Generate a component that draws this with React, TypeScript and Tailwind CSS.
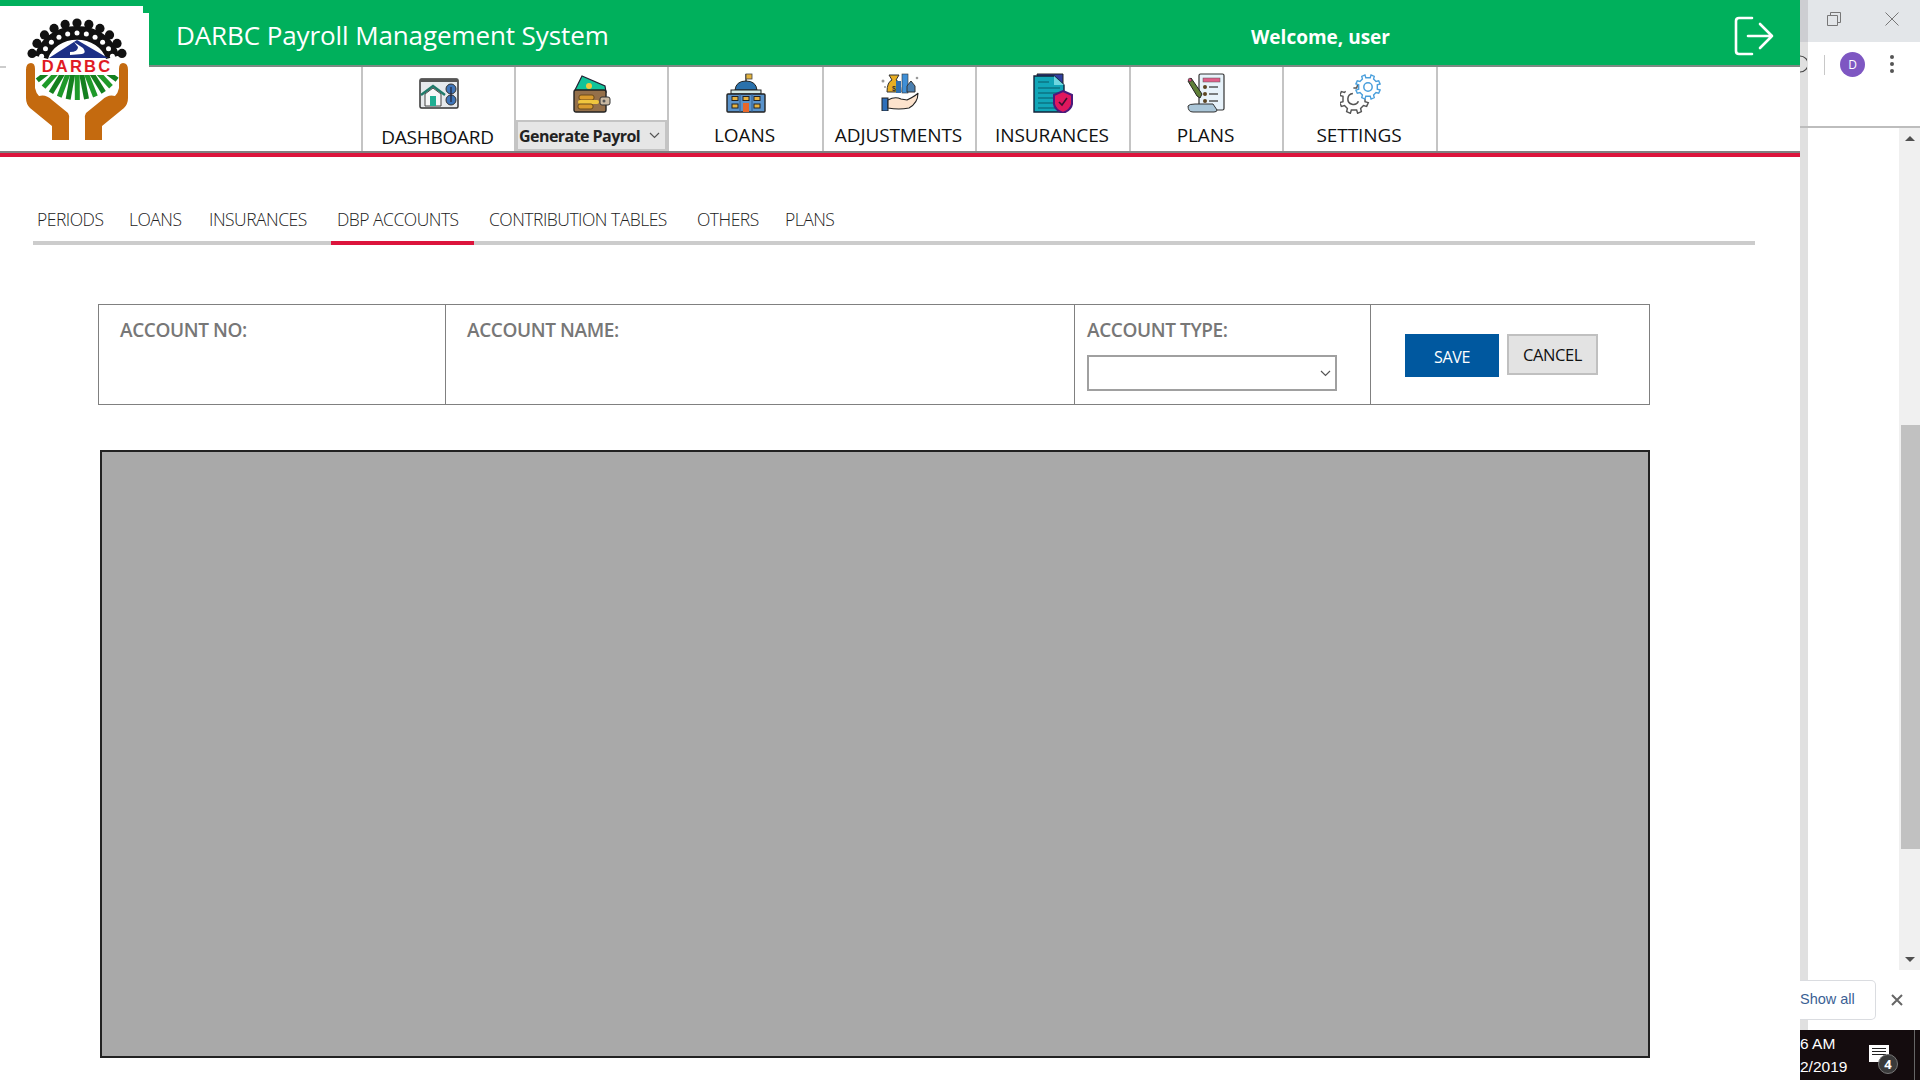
import React from "react";

const Logo = () => {
  const teeth = Array.from({ length: 11 }, (_, i) => 197 + i * 14.6);
  const hand = "M26 70 Q26 63 31 63 Q35 63 35 69 L35 88 Q36 93 39 96 Q46 94 52 100 L68 113 Q70 116 69 120 L69 140 L52 140 L52 126 L30 108 Q26 104 26 98 Z";
  return (
    <svg width="154" height="145" viewBox="0 0 154 145">
      <defs>
        <clipPath id="fanclip">
          <rect x="30" y="75" width="94" height="30" />
        </clipPath>
      </defs>
      <path d="M0 67 H6" stroke="#999" strokeWidth="1" />
      <path d="M34.5 55.6 A44 40 0 0 1 119.5 55.6 L106 59 A30 26 0 0 0 48 59 Z" fill="#111" />
      {teeth.map((a, i) => {
        const r = (a * Math.PI) / 180;
        return (
          <g key={i}>
            <circle cx={77 + 47 * Math.cos(r)} cy={66 + 43 * Math.sin(r)} r="4.6" fill="#111" />
            <circle cx={77 + 37 * Math.cos(r)} cy={66 + 33 * Math.sin(r)} r="2.5" fill="#fff" />
          </g>
        );
      })}
      <path d="M49 58 L77 40 L108 58 Z" fill="#1c2f86" />
      <path d="M70 52 Q78 52 78 47 L74 42 L83 48 Q87 53 82 54 L70 55 Z" fill="#fff" />
      <g clipPath="url(#fanclip)">
        {Array.from({ length: 13 }, (_, i) => {
          const a = ((26 + i * 10.6) * Math.PI) / 180;
          return (
            <line key={i} x1={77 + 18 * Math.cos(a)} y1={50 + 18 * Math.sin(a)} x2={77 + 50 * Math.cos(a)} y2={50 + 50 * Math.sin(a)} stroke={i % 2 ? "#14801f" : "#1f9a2a"} strokeWidth="5" />
          );
        })}
      </g>
      <path d={hand} fill="#c46a0f" />
      <path d={hand} fill="#c46a0f" transform="translate(154 0) scale(-1 1)" />
      <text x="77" y="72" textAnchor="middle" fill="#e01b24" fontFamily="'Liberation Sans',sans-serif" fontWeight="700" fontSize="16.5" letterSpacing="2.2">DARBC</text>
    </svg>
  );
};

const DashIcon = () => (
  <svg width="40" height="31" viewBox="0 0 40 31">
    <rect x="1" y="1" width="38" height="29" rx="1.5" fill="#e6e9ec" stroke="#333" strokeWidth="1.5" />
    <rect x="1" y="1" width="38" height="3" fill="#555" />
    <path d="M2 17 L14 8 L26 17" fill="none" stroke="#1f7a6a" strokeWidth="2.4" />
    <path d="M6 16 V28 H22 V16 L14 10 Z" fill="#f6f7f8" stroke="#444" strokeWidth="1" />
    <rect x="11" y="18" width="6" height="10" fill="#1fae92" />
    <circle cx="32" cy="11" r="5" fill="#3e74b8" stroke="#333" />
    <circle cx="32" cy="22" r="5" fill="#3e74b8" stroke="#333" />
    <path d="M32 9 V24" stroke="#223" strokeWidth="1.2" />
  </svg>
);
const WalletIcon = () => (
  <svg width="38" height="38" viewBox="0 0 38 38">
    <path d="M2 15 L9 1 L32 11 L33 17 Z" fill="#12c49a" stroke="#223" strokeWidth="1.2" />
    <circle cx="16" cy="11" r="3" fill="#f3c93c" />
    <rect x="1" y="15" width="32" height="22" rx="2" fill="#95704a" stroke="#222" strokeWidth="1.4" />
    <rect x="6" y="20" width="15" height="5" rx="2" fill="#d99b2e" stroke="#6b4a1a" />
    <rect x="5" y="25" width="21" height="4" rx="2" fill="#f0c63e" />
    <rect x="5" y="29" width="15" height="5" rx="2" fill="#d99b2e" stroke="#6b4a1a" />
    <rect x="27" y="22" width="10" height="8" rx="2" fill="#c9b9a2" stroke="#333" />
    <circle cx="31" cy="26" r="1.5" fill="#555" />
  </svg>
);
const LoansIcon = () => (
  <svg width="40" height="40" viewBox="0 0 40 40">
    <path d="M20 9 V1" stroke="#222" strokeWidth="1.3" />
    <rect x="20" y="1" width="6" height="5" fill="#e3b23c" stroke="#444" strokeWidth="0.8" />
    <path d="M9 17 Q10 8 20 8 Q30 8 31 17 Z" fill="#2a71ac" stroke="#222" strokeWidth="1" />
    <rect x="5" y="17" width="30" height="4" fill="#d2e9e6" stroke="#222" strokeWidth="1" />
    <rect x="1" y="21" width="38" height="18" rx="1" fill="#5a93cb" stroke="#222" strokeWidth="1.4" />
    {[6, 17, 28].map((x) => (
      <rect key={x} x={x} y="23.5" width="6" height="4" fill="#e8b33f" stroke="#222" strokeWidth="1" />
    ))}
    {[6, 28].map((x) => (
      <rect key={x} x={x} y="31" width="6" height="4" fill="#e8b33f" stroke="#222" strokeWidth="1" />
    ))}
    <rect x="17" y="30" width="6" height="9" fill="#e8672a" />
    <path d="M14 21 V39 M26 21 V39" stroke="#2c5e92" />
  </svg>
);
const AdjustIcon = () => (
  <svg width="38" height="38" viewBox="0 0 38 38">
    <circle cx="2" cy="8" r="1.5" fill="#999" />
    <circle cx="36" cy="5" r="1.3" fill="#999" />
    <circle cx="4" cy="14" r="1" fill="#999" />
    <path d="M6 19 Q6 9 11 7 L8 2 H18 L15 7 Q20 9 20 19 Z" fill="#e9ae22" stroke="#333" />
    <text x="13" y="18" textAnchor="middle" fontSize="7" fontWeight="700" fill="#333" fontFamily="'Liberation Sans',sans-serif">$</text>
    <rect x="21" y="1" width="6" height="19" fill="#3f8fd6" stroke="#333" strokeWidth="0.6" />
    <rect x="15" y="8" width="5" height="12" fill="#2f6fb0" />
    <path d="M26 19 V13 L30 8 L34 13 V19 Z" fill="#4a7fb0" stroke="#333" />
    <rect x="1" y="25" width="6" height="13" fill="#2e6fba" stroke="#222" />
    <path d="M7 27 Q14 23 20 26 L26 27 Q36 22 37 20 Q37 30 28 35 Q18 37 7 35 Z" fill="#fde3cd" stroke="#222" strokeWidth="1.1" />
  </svg>
);
const InsIcon = () => (
  <svg width="40" height="40" viewBox="0 0 40 40">
    <path d="M4 1 H30 V30 H10 Z" fill="#2f3f9f" stroke="#222" />
    <path d="M1 3 H21 L31 12 V39 H1 Z" fill="#12a6b8" stroke="#13233a" strokeWidth="1.4" />
    <path d="M21 3 V12 H31 Z" fill="#6ed7e0" />
    <path d="M5 9 H16 M5 15 H27 M5 20 H27 M5 25 H25 M5 30 H25 M5 35 H25" stroke="#085a68" strokeWidth="1.2" />
    <path d="M30 18 L39 22 V31 Q38 37 30 40 Q22 37 21 31 V22 Z" fill="#e0175e" stroke="#4a1a7c" strokeWidth="2" />
    <path d="M26 29 L29 32 L34 25" fill="none" stroke="#3a1030" strokeWidth="1.6" />
  </svg>
);
const PlansIcon = () => (
  <svg width="39" height="40" viewBox="0 0 39 40">
    <rect x="12" y="1" width="25" height="36" rx="1.5" fill="#e7f2fa" stroke="#333" strokeWidth="1.2" />
    <rect x="16" y="5" width="17" height="4" fill="#df5e88" stroke="#555" strokeWidth="0.5" />
    {[14, 21, 28].map((y) => (
      <g key={y}>
        <circle cx="18" cy={y} r="2" fill="#5c4522" />
        <path d={`M22 ${y} H31`} stroke="#555" strokeWidth="1.5" />
      </g>
    ))}
    <path d="M1 8 L4 5 L15 21 L13 25 L10 23 Z" fill="#5f7f37" stroke="#222" />
    <circle cx="3" cy="7" r="1.8" fill="#d04878" stroke="#333" strokeWidth="0.6" />
    <path d="M1 33 Q2 31 8 31 H26 L30 37 Q30 39 27 39 H6 Q1 39 1 33 Z" fill="#aac6d8" stroke="#333" />
  </svg>
);
const gear = "M0 -10 L2.4 -10 L3.3 -13 L6.7 -11.5 L6 -8.6 L8.6 -6 L11.5 -6.7 L13 -3.3 L10 -2.4 V2.4 L13 3.3 L11.5 6.7 L8.6 6 L6 8.6 L6.7 11.5 L3.3 13 L2.4 10 H-2.4 L-3.3 13 L-6.7 11.5 L-6 8.6 L-8.6 6 L-11.5 6.7 L-13 3.3 L-10 2.4 V-2.4 L-13 -3.3 L-11.5 -6.7 L-8.6 -6 L-6 -8.6 L-6.7 -11.5 L-3.3 -13 L-2.4 -10 Z";
const SettingsIcon = () => (
  <svg width="41" height="41" viewBox="0 0 41 41">
    <g transform="translate(14 26) scale(1.1)">
      <path d={gear} fill="#fff" stroke="#555" strokeWidth="1.3" strokeDasharray="70 14" strokeDashoffset="-28" />
      <path d="M-1 -5 A5 5 0 1 0 4 2" fill="none" stroke="#555" strokeWidth="1.4" />
    </g>
    <g transform="translate(28 14) scale(0.93)">
      <path d={gear} fill="#fff" stroke="#4a9fdc" strokeWidth="1.5" />
      <circle r="4.5" fill="none" stroke="#4a9fdc" strokeWidth="1.6" />
    </g>
  </svg>
);

const Chevron = () => (
  <svg width="11" height="7" viewBox="0 0 11 7">
    <path d="M1 1 L5.5 5.5 L10 1" fill="none" stroke="#555" strokeWidth="1.2" />
  </svg>
);

const navCells = [
  { label: "LOANS", icon: <LoansIcon />, w: "w-[155px]" },
  { label: "ADJUSTMENTS", icon: <AdjustIcon />, w: "w-[153px]" },
  { label: "INSURANCES", icon: <InsIcon />, w: "w-[154px]" },
  { label: "PLANS", icon: <PlansIcon />, w: "w-[153px]" },
  { label: "SETTINGS", icon: <SettingsIcon />, w: "w-[154px]" },
];

const tabs = [
  { label: "PERIODS", cls: "w-[92px] pl-1 border-transparent" },
  { label: "LOANS", cls: "w-[80px] pl-1 border-transparent" },
  { label: "INSURANCES", cls: "w-[126px] pl-1 border-transparent" },
  { label: "DBP ACCOUNTS", cls: "w-[143px] pl-1.5 border-[#dc143c]" },
  { label: "CONTRIBUTION TABLES", cls: "w-[219px] pl-[15px] border-transparent" },
  { label: "OTHERS", cls: "w-[88px] pl-1 border-transparent" },
  { label: "PLANS", cls: "w-[60px] pl-1 border-transparent" },
];

const FormLabel = ({ children }: { children: React.ReactNode }) => (
  <div className="text-[19px] font-semibold leading-[24px] tracking-[-0.4px] text-[#777]">{children}</div>
);

export default function App() {
  return (
    <div className="relative flex h-[1080px] w-[1920px] overflow-hidden bg-white [font-family:'Open_Sans',sans-serif]">
      <div className="w-[1800px] shrink-0">
        <header className="flex h-[67px] items-center border-b-2 border-[#7d8a83] bg-[#00b05c] pl-[176px]">
          <div className="w-[1075px] pt-[6px] text-[26px] tracking-[-0.1px] text-white">DARBC Payroll Management System</div>
          <div className="w-[482px] pt-[9px] text-[19px] font-bold tracking-[0px] text-white">Welcome, user</div>
          <svg width="42" height="42" viewBox="0 0 42 42" className="mt-[6px]">
            <path d="M19 3 H6 Q3 3 3 6 V36 Q3 39 6 39 H19 M15 21 H39 M27 9 L39 21 L27 33" fill="none" stroke="#fff" strokeWidth="2.6" strokeLinecap="round" strokeLinejoin="round" />
          </svg>
        </header>
        <nav className="flex h-[84px] pl-[361px]">
          <div className="flex w-[153px] flex-col items-center border-l-2 border-[#c4c4c4]">
            <div className="mt-[11px] h-[46px]"><DashIcon /></div>
            <div className="pr-[2px] text-[19px] font-medium leading-[26px] tracking-[-0.25px] text-[#111]">DASHBOARD</div>
          </div>
          <div className="flex w-[153px] flex-col items-center border-l-2 border-[#c4c4c4]">
            <div className="mt-[8px] h-[45px]"><WalletIcon /></div>
            <div className="flex h-[31px] w-full items-center justify-between border-2 border-[#c4c4c4] bg-[#e6e6e6] pl-[1px] pr-[5px]">
              <span className="text-[16px] font-bold tracking-[-0.55px] text-[#222]">Generate Payrol</span>
              <Chevron />
            </div>
          </div>
          {navCells.map((c) => (
            <div key={c.label} className={`flex flex-col items-center border-l-2 border-[#c4c4c4] ${c.w}`}>
              <div className="mt-[6px] h-[49px]">{c.icon}</div>
              <div className="pr-[2px] text-[19px] font-medium leading-[26px] tracking-[-0.1px] text-[#111]">{c.label}</div>
            </div>
          ))}
          <div className="border-l-2 border-[#c4c4c4]" />
        </nav>
        <div className="h-[6px] border-t-2 border-[#808080] bg-[#dc143c]" />

        <div className="ml-[33px] flex h-[88px] w-[1722px] items-end border-b-4 border-[#cccccc]">
          {tabs.map((t) => (
            <div key={t.label} className={`-mb-1 h-[38px] border-b-4 text-[17.5px] font-light leading-[24px] tracking-[-0.5px] text-[#222] ${t.cls}`}>
              {t.label}
            </div>
          ))}
        </div>

        <div className="ml-[98px] mt-[59px] flex h-[101px] w-[1552px] border border-[#808080]">
          <div className="w-[346px] pl-[21px] pt-[13px]"><FormLabel>ACCOUNT NO:</FormLabel></div>
          <div className="w-[629px] border-l border-[#808080] pl-[21px] pt-[13px]"><FormLabel>ACCOUNT NAME:</FormLabel></div>
          <div className="w-[296px] border-l border-[#808080] pl-[12px] pt-[13px]">
            <FormLabel>ACCOUNT TYPE:</FormLabel>
            <div className="mt-[13px] flex h-[36px] w-[250px] items-center justify-end border-2 border-[#a0a0a0] pr-[4px]">
              <Chevron />
            </div>
          </div>
          <div className="flex flex-1 items-start border-l border-[#808080] pl-[34px] pt-[29px]">
            <button className="flex h-[43px] w-[94px] items-center justify-center bg-[#00589f] pt-[2px] text-[16px] tracking-[-0.3px] text-white">SAVE</button>
            <button className="ml-[8px] flex h-[41px] w-[91px] items-center justify-center border-2 border-[#c0c0c0] bg-[#e3e3e3] pt-[1px] text-[16.5px] tracking-[-0.4px] text-[#111]">CANCEL</button>
          </div>
        </div>

        <div className="ml-[100px] mt-[45px] h-[608px] w-[1550px] border-2 border-[#222] bg-[#a9a9a9]" />
      </div>

      <div className="flex w-[120px] shrink-0 flex-col">
        <div className="flex h-[42px]">
          <div className="w-[8px] bg-[#cdced2]" />
          <div className="flex flex-1 items-start bg-[#e3e6e9] pl-[19px] pt-[12px]">
            <svg width="14" height="14" viewBox="0 0 14 14">
              <path d="M3.5 3 V0.5 H13.5 V10.5 H11 M0.5 3.5 H10.5 V13.5 H0.5 Z" fill="none" stroke="#777" />
            </svg>
            <svg width="14" height="14" viewBox="0 0 14 14" className="ml-[44px]">
              <path d="M0.5 0.5 L13.5 13.5 M13.5 0.5 L0.5 13.5" stroke="#777" />
            </svg>
          </div>
        </div>
        <div className="flex h-[86px] border-b-2 border-[#bdbdbd]">
          <div className="w-[8px] bg-[#e0e0e0] pt-[13px]">
            <svg width="7" height="18" viewBox="0 0 7 18">
              <path d="M0 1 A8 8 0 0 1 0 17" fill="none" stroke="#444" strokeWidth="1.2" />
            </svg>
          </div>
          <div className="flex flex-1 items-start bg-white pl-[16px] pt-[10px]">
            <div className="mt-[3px] h-[20px] w-px bg-[#c8c8c8]" />
            <div className="ml-[15px] flex h-[25px] w-[25px] items-center justify-center rounded-full bg-[#7e57c2] text-[12px] text-white">D</div>
            <div className="ml-[25px] mt-[3px] flex flex-col gap-[3px]">
              <div className="h-[4px] w-[4px] rounded-full bg-[#555]" />
              <div className="h-[4px] w-[4px] rounded-full bg-[#555]" />
              <div className="h-[4px] w-[4px] rounded-full bg-[#555]" />
            </div>
          </div>
        </div>
        <div className="flex h-[842px]">
          <div className="w-[8px] bg-[#e0e0e0]" />
          <div className="flex-1 bg-white" />
          <div className="flex w-[21px] flex-col bg-[#f0f0f0]">
            <div className="flex h-[21px] items-center justify-center">
              <div className="h-0 w-0 border-x-[5px] border-b-[5px] border-x-transparent border-b-[#505050]" />
            </div>
            <div className="ml-[2px] mt-[276px] h-[424px] w-[19px] bg-[#c1c1c1]" />
            <div className="mt-auto flex h-[21px] items-center justify-center">
              <div className="h-0 w-0 border-x-[5px] border-t-[5px] border-x-transparent border-t-[#505050]" />
            </div>
          </div>
        </div>
        <div className="flex h-[60px] items-center">
          <div className="h-full w-[8px] shrink-0 bg-[#e0e0e0]" />
          <div className="-ml-[8px] flex h-[40px] w-[76px] shrink-0 items-center rounded-r-[5px] border border-l-0 border-[#dadce0] bg-white text-[14.5px] text-[#3b5f94] [font-family:'Liberation_Sans',sans-serif]">
            <span className="whitespace-nowrap">Show all</span>
          </div>
          <svg width="12" height="12" viewBox="0 0 12 12" className="ml-[15px]">
            <path d="M1 1 L11 11 M11 1 L1 11" stroke="#666" strokeWidth="2" />
          </svg>
        </div>
        <div className="flex h-[50px] bg-[#140c0e] text-[15.5px] leading-[23px] text-white">
          <div className="w-[69px] pt-[2px] [font-family:'Liberation_Sans',sans-serif]">
            <div className="whitespace-nowrap">6 AM</div>
            <div className="whitespace-nowrap">2/2019</div>
          </div>
          <div className="relative mt-[15px] flex h-[17px] w-[20px] flex-col gap-[2px] bg-white px-[3px] pt-[3px]">
            <div className="h-px bg-[#222]" />
            <div className="h-px bg-[#222]" />
            <div className="h-px bg-[#222]" />
            <div className="absolute -bottom-[12px] -right-[9px] flex h-[20px] w-[20px] items-center justify-center rounded-full border border-[#777] bg-[#3a3a3a] text-[13px] font-bold leading-none text-white">4</div>
          </div>
          <div className="ml-[25px] h-full w-px bg-[#666]" />
        </div>
      </div>

      <div className="absolute left-0 top-[6px] h-[145px] w-[149px] bg-white [clip-path:polygon(0_0,143px_0,143px_7px,100%_7px,100%_100%,0_100%)]">
        <div className="-mt-[6px]"><Logo /></div>
      </div>
    </div>
  );
}
